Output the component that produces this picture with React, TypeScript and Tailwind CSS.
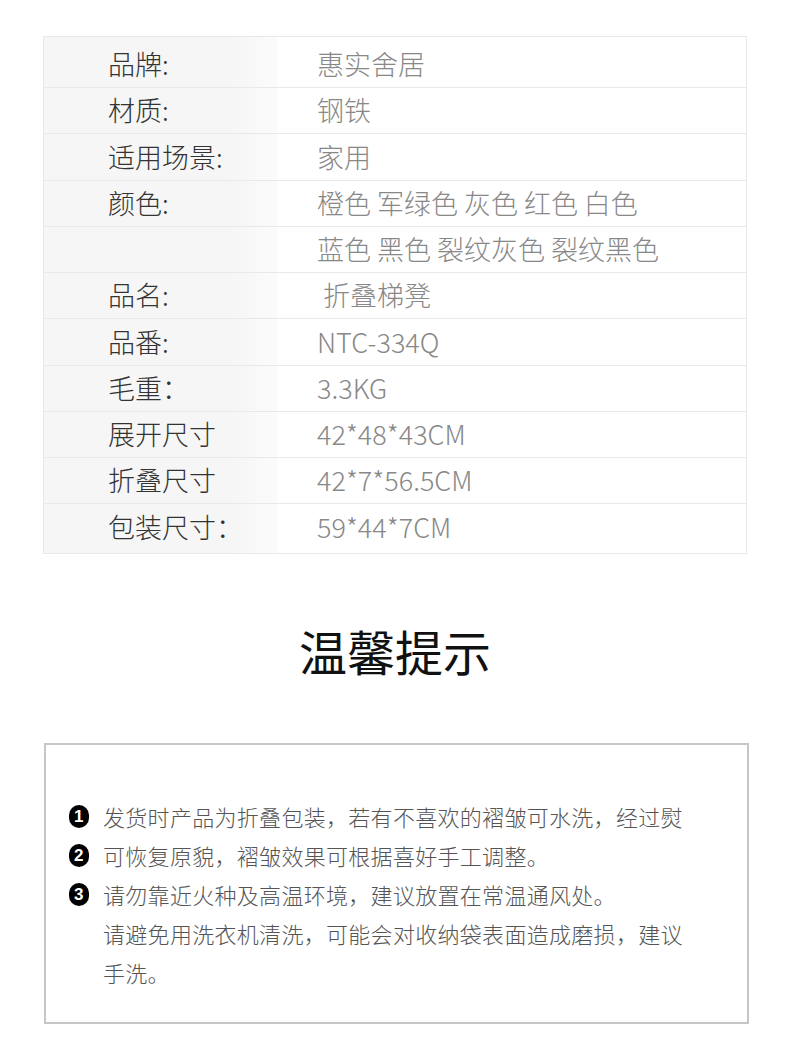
import React from "react";

const rows: { label: string; value: string; h: string; extra?: string }[] = [
  { label: "品牌:", value: "惠实舍居", h: "h-[51px]", extra: "pt-[4px]" },
  { label: "材质:", value: "钢铁", h: "h-[46px]" },
  { label: "适用场景:", value: "家用", h: "h-[47px]" },
  { label: "颜色:", value: "橙色 军绿色 灰色 红色 白色", h: "h-[46px]" },
  { label: "", value: "蓝色 黑色 裂纹灰色 裂纹黑色", h: "h-[46px]" },
  { label: "品名:", value: "\u00a0折叠梯凳", h: "h-[46px]" },
  { label: "品番:", value: "NTC-334Q", h: "h-[47px]" },
  { label: "毛重：", value: "3.3KG", h: "h-[46px]" },
  { label: "展开尺寸", value: "42*48*43CM", h: "h-[46px]" },
  { label: "折叠尺寸", value: "42*7*56.5CM", h: "h-[46px]" },
  { label: "包装尺寸：", value: "59*44*7CM", h: "h-[50px]", extra: "pb-[2px]" },
];

const font = { fontFamily: '"Noto Sans CJK SC", "Noto Sans", sans-serif' };

function Bullet({ n }: { n: number }) {
  return (
    <span className="mr-[14px] flex h-[23px] w-[20px] shrink-0 items-center justify-center rounded-full bg-black text-[17px] font-bold leading-none text-white" style={{ fontFamily: '"Liberation Sans", sans-serif' }}>
      {n}
    </span>
  );
}

export default function App() {
  return (
    <div className="h-[1061px] w-[790px] overflow-hidden bg-white" style={font}>
      <div className="h-[36px]" />
      <div className="ml-[43px] w-[704px] border border-b-0 border-[#e9e9e9]">
        {rows.map((r, i) => (
          <div key={i} className={`flex box-border border-b border-[#e9e9e9] ${r.h}`}>
            <div className={`flex w-[234px] items-center bg-gradient-to-r from-[#f6f6f6] from-80% to-[#fbfbfb] pl-[64px] text-[27px] font-light text-[#333] ${r.extra ?? ""}`}>
              {r.label}
            </div>
            <div className={`flex flex-1 items-center pl-[39px] text-[27px] font-light text-[#888] ${r.extra ?? ""}`}>
              {r.value}
            </div>
          </div>
        ))}
      </div>
      <div className="mt-[72px] flex h-[48px] items-center justify-center text-[48px] leading-none text-[#111]">
        温馨提示
      </div>
      <div className="ml-[44px] mt-[69px] box-border h-[281px] w-[705px] border-2 border-[#c6c6c6] pt-[52px] text-[22px] font-light leading-[39px] tracking-[0.3px] text-[#555]">
        <div className="flex items-center pl-[23px]">
          <Bullet n={1} />
          <span>发货时产品为折叠包装，若有不喜欢的褶皱可水洗，经过熨</span>
        </div>
        <div className="flex items-center pl-[23px]">
          <Bullet n={2} />
          <span>可恢复原貌，褶皱效果可根据喜好手工调整。</span>
        </div>
        <div className="flex items-center pl-[23px]">
          <Bullet n={3} />
          <span>请勿靠近火种及高温环境，建议放置在常温通风处。</span>
        </div>
        <div className="pl-[57px]">请避免用洗衣机清洗，可能会对收纳袋表面造成磨损，建议</div>
        <div className="pl-[57px]">手洗。</div>
      </div>
    </div>
  );
}
